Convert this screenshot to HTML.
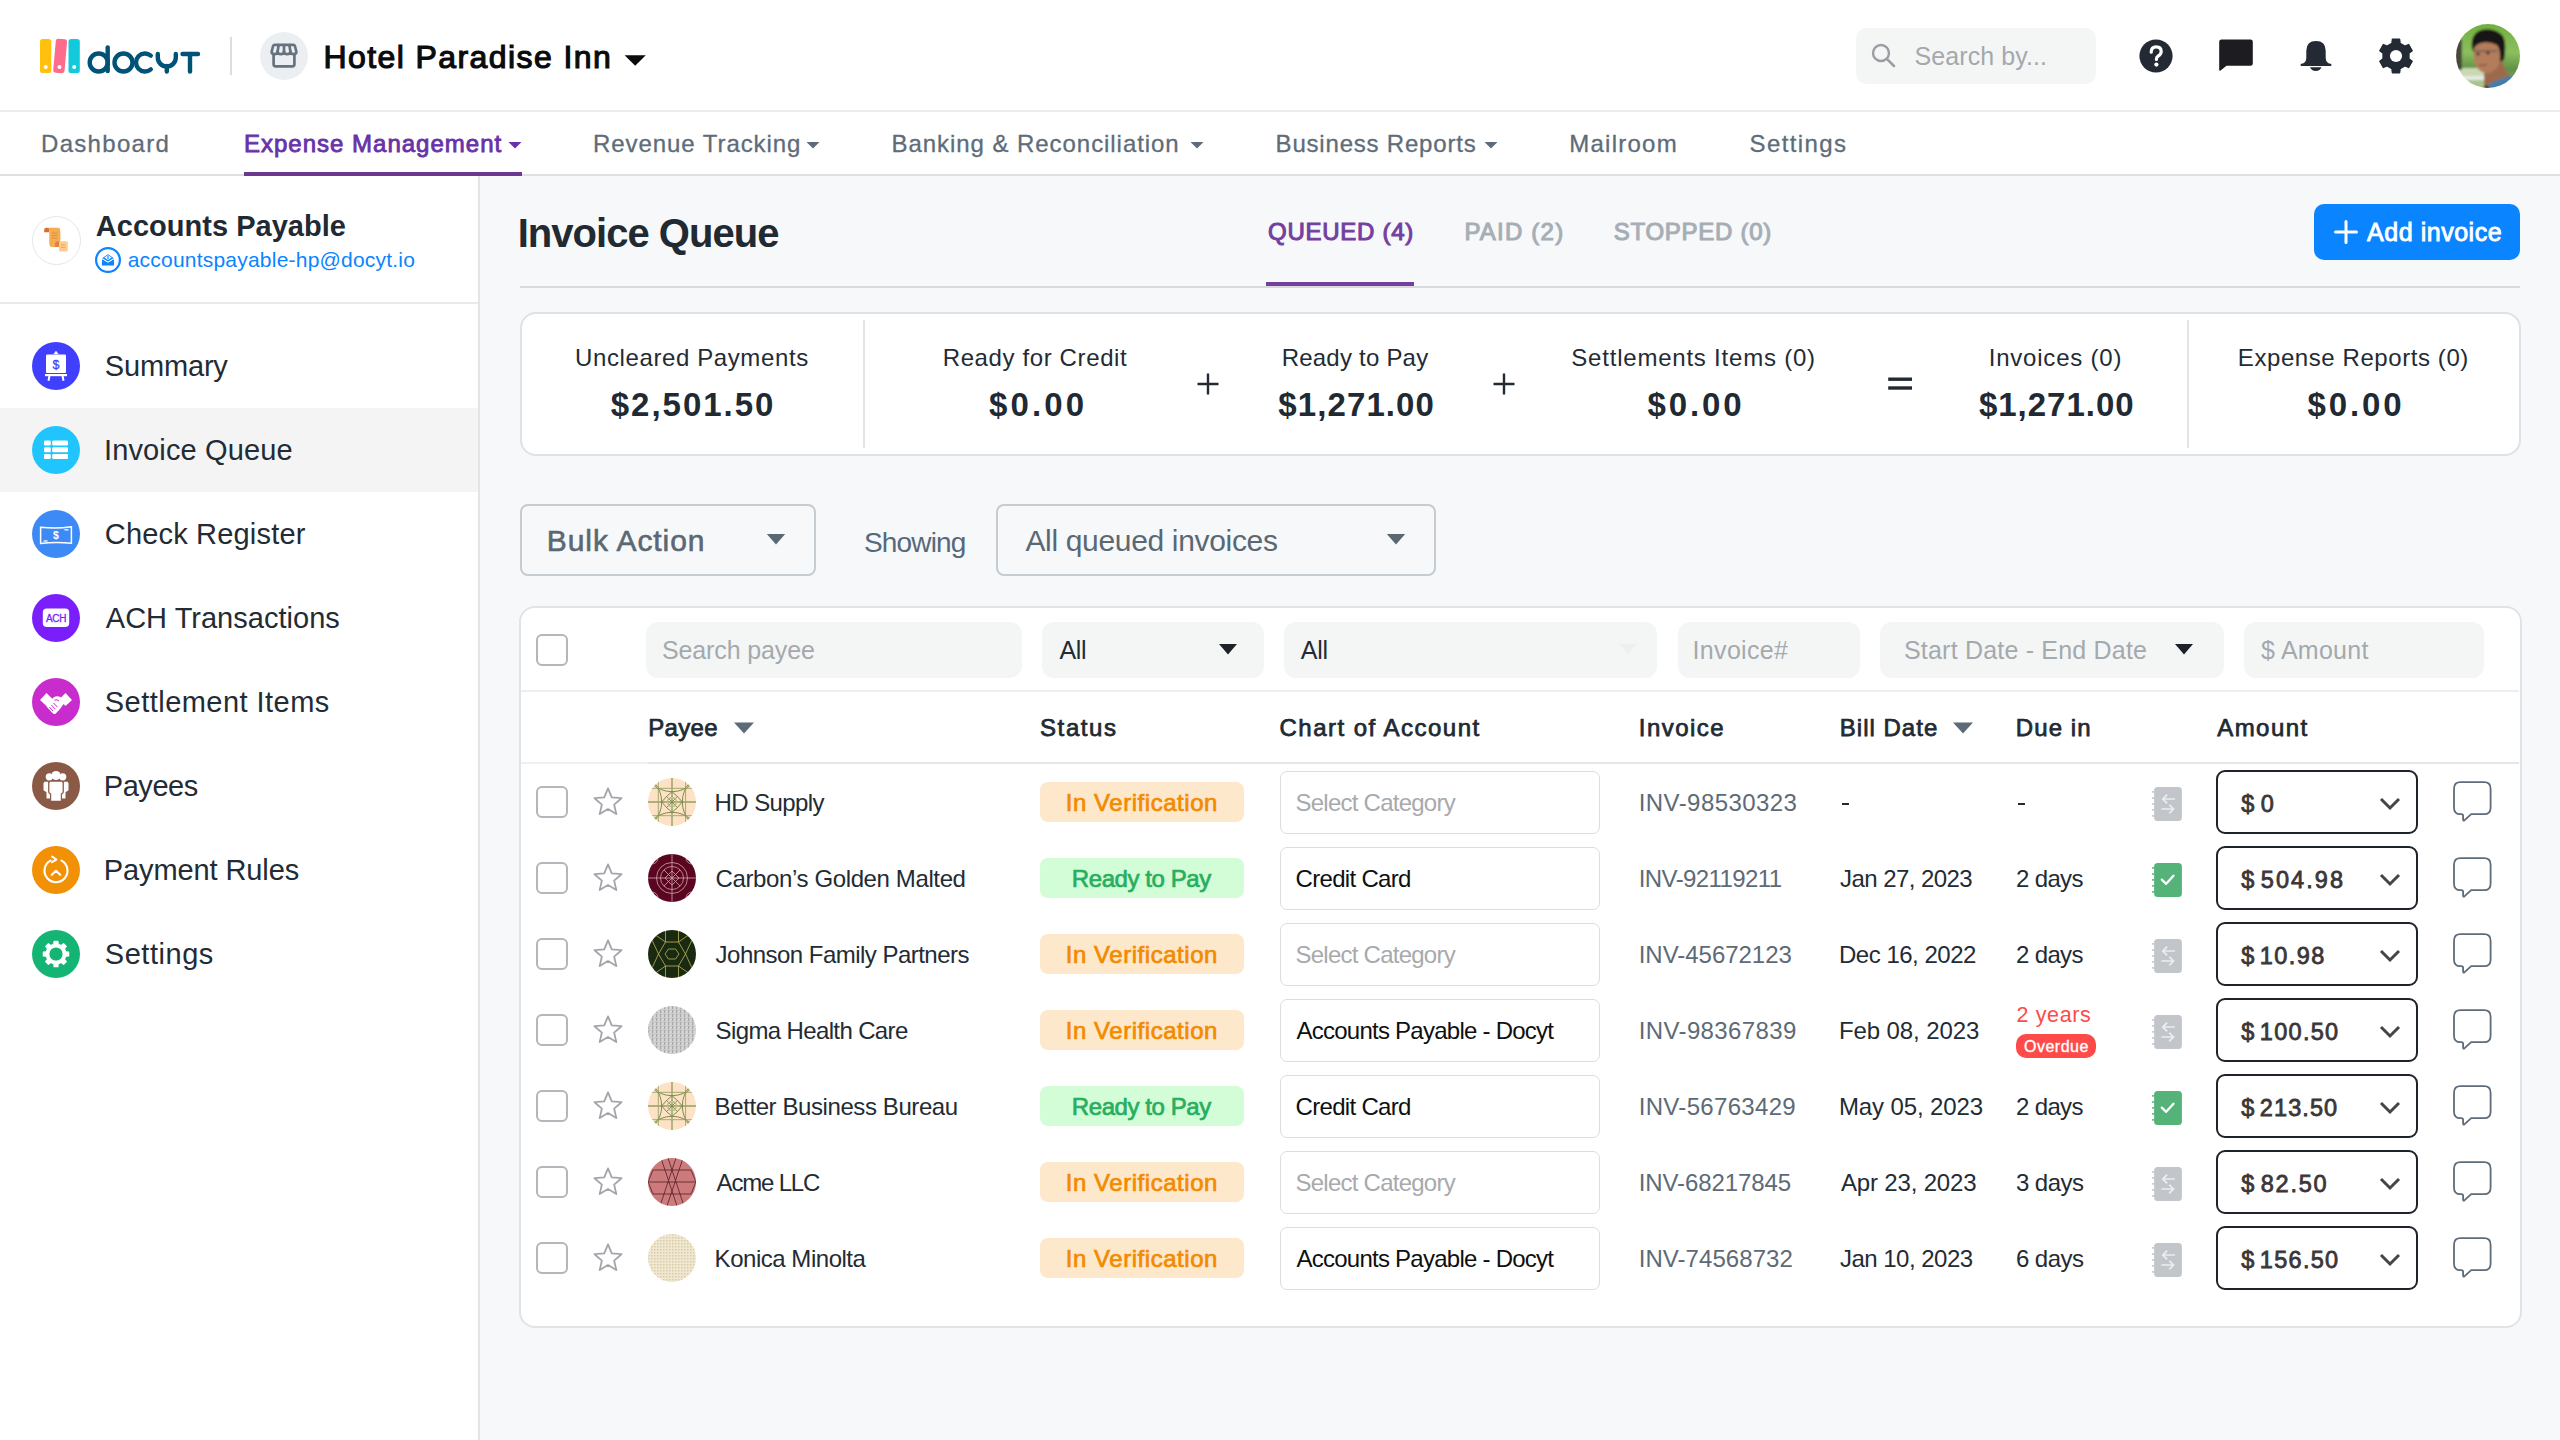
<!DOCTYPE html>
<html><head><meta charset="utf-8"><title>Invoice Queue</title>
<style>
html,body{margin:0;padding:0}
body{width:2560px;height:1440px;position:relative;overflow:hidden;background:#f7f8fa;font-family:"Liberation Sans", sans-serif}
</style></head><body>
<div style="position:absolute;left:0px;top:0px;width:2560px;height:110px;background:#fff;z-index:0"></div>
<div style="position:absolute;left:0px;top:110px;width:2560px;height:2px;background:#ebecee;z-index:0"></div>
<div style="position:absolute;left:0px;top:112px;width:2560px;height:62px;background:#fff;z-index:0"></div>
<div style="position:absolute;left:0px;top:174px;width:2560px;height:2px;background:#dfe0e2;z-index:0"></div>
<div style="position:absolute;left:0px;top:176px;width:478px;height:1264px;background:#fff;z-index:0"></div>
<div style="position:absolute;left:478px;top:176px;width:2px;height:1264px;background:#e3e4e6;z-index:0"></div>
<svg style="position:absolute;left:36px;top:34px;z-index:3" width="170" height="46" viewBox="0 0 170 46">
<rect x="4" y="5" width="11.3" height="34" rx="2.6" fill="#ffc10e"/>
<rect x="18.5" y="5" width="11.3" height="34" rx="2.6" fill="#ff6b8d" transform="rotate(5 24 22)"/>
<rect x="32.5" y="5" width="11.3" height="34" rx="2.6" fill="#13c9dc"/>
<circle cx="9.7" cy="33" r="2" fill="#fff"/>
<circle cx="23.5" cy="33" r="2" fill="#fff"/>
<circle cx="38.2" cy="33" r="2" fill="#fff"/>
<g fill="none" stroke="#005377" stroke-width="4.4" stroke-linecap="round">
<circle cx="62.7" cy="28.5" r="9"/>
<line x1="71.7" y1="13.5" x2="71.7" y2="37"/>
<circle cx="87.5" cy="28.5" r="9"/>
<path d="M114.8 21.6 A 9 9 0 1 0 114.8 35.4"/>
<path d="M121.8 20 V23.5 A 9 9 0 0 0 139.8 23.5 V20"/>
<line x1="130.8" y1="32" x2="130.8" y2="37.5"/>
<line x1="146.5" y1="20" x2="162" y2="20"/>
<line x1="154" y1="20" x2="154" y2="37.5"/>
</g></svg>
<div style="position:absolute;left:230px;top:37px;width:2px;height:38px;background:#dcdddf;z-index:1"></div>
<div style="position:absolute;left:260px;top:32px;width:48px;height:48px;background:#eceff2;border-radius:50%;z-index:1"></div>
<svg style="position:absolute;left:268px;top:41px;z-index:3" width="32" height="30" viewBox="0 0 32 30">
<g fill="none" stroke="#66727e" stroke-width="2.7" stroke-linejoin="round" stroke-linecap="round">
<path d="M6.8 3.9 H25.2 Q26.5 3.9 26.9 5 L28.4 10.8 Q28.4 13.2 25.6 13.2 Q22.4 13.2 22.4 10.5 Q22.4 13.2 19.2 13.2 Q16 13.2 16 10.5 Q16 13.2 12.8 13.2 Q9.6 13.2 9.6 10.5 Q9.6 13.2 6.4 13.2 Q3.6 13.2 3.6 10.8 L5.1 5 Q5.5 3.9 6.8 3.9 Z"/>
<path d="M9.6 10.5 L10.6 4.2 M16 10.5 V4.2 M22.4 10.5 L21.4 4.2"/>
<path d="M5.6 13.5 V23.3 Q5.6 25.4 7.7 25.4 H24.3 Q26.4 25.4 26.4 23.3 V13.5"/>
</g></svg>
<svg style="position:absolute;left:622px;top:50px;z-index:3" width="26" height="18" viewBox="0 0 26 18"><path d="M2.6 5.3 H23.8 L13.2 15.8 Z" fill="#0b0b0c"/></svg>
<div style="position:absolute;left:1856px;top:28px;width:240px;height:56px;background:#f4f6f6;border-radius:10px;z-index:1"></div>
<svg style="position:absolute;left:1868px;top:40px;z-index:3" width="32" height="32" viewBox="0 0 32 32"><circle cx="13" cy="13" r="8" fill="none" stroke="#9a9ea3" stroke-width="2.4"/><line x1="18.8" y1="18.8" x2="26" y2="26" stroke="#9a9ea3" stroke-width="2.6" stroke-linecap="round"/></svg>
<svg style="position:absolute;left:2136px;top:36px;z-index:3" width="40" height="40" viewBox="0 0 40 40"><circle cx="20" cy="20" r="16.6" fill="#232a33"/>
<path d="M15.2 16.2 Q15.2 10.8 20.2 10.8 Q25.2 10.8 25.2 15.6 Q25.2 18.4 22.2 20 Q20.4 21 20.4 23.5" fill="none" stroke="#fff" stroke-width="3.2" stroke-linecap="round"/>
<circle cx="20.4" cy="28.6" r="2.1" fill="#fff"/></svg>
<svg style="position:absolute;left:2216px;top:36px;z-index:3" width="40" height="40" viewBox="0 0 40 40"><path d="M5.5 3.5 H34.5 Q36.8 3.5 36.8 5.8 V27.5 Q36.8 29.8 34.5 29.8 H10.5 L4.6 34.6 Q3.2 35.4 3.2 33.8 V5.8 Q3.2 3.5 5.5 3.5 Z" fill="#1d1c21"/></svg>
<svg style="position:absolute;left:2296px;top:36px;z-index:3" width="40" height="40" viewBox="0 0 40 40"><path d="M10.3 14.7 Q10.3 5 20 5 Q29.7 5 29.7 14.7 V21.5 Q29.7 27 34 27.8 H35.3 V30 H4.7 V27.8 H6 Q10.3 27 10.3 21.5 Z" fill="#232a33"/>
<path d="M14 31.3 H25.5 Q24.2 35 19.8 35 Q15.3 35 14 31.3 Z" fill="#232a33"/></svg>
<svg style="position:absolute;left:2376px;top:36px;z-index:3" width="40" height="40" viewBox="0 0 40 40"><path d="M15.97 7.43 L16.46 3.37 L23.54 3.37 L24.03 7.43 L28.87 10.23 L32.63 8.62 L36.17 14.76 L32.90 17.20 L32.90 22.80 L36.17 25.24 L32.63 31.38 L28.87 29.77 L24.03 32.57 L23.54 36.63 L16.46 36.63 L15.97 32.57 L11.13 29.77 L7.37 31.38 L3.83 25.24 L7.10 22.80 L7.10 17.20 L3.83 14.76 L7.37 8.62 L11.13 10.23 Z" fill="#232a33" stroke="#232a33" stroke-width="1.5" stroke-linejoin="round"/>
<circle cx="20" cy="20" r="6.1" fill="#fff"/></svg>
<svg style="position:absolute;left:2456px;top:24px;z-index:3" width="64" height="64" viewBox="0 0 64 64"><defs><clipPath id="av"><circle cx="32" cy="32" r="32"/></clipPath>
<filter id="avb" x="-10%" y="-10%" width="120%" height="120%"><feGaussianBlur stdDeviation="0.9"/></filter>
<linearGradient id="avg" x1="0" y1="0" x2="0" y2="1"><stop offset="0" stop-color="#6fae3e"/><stop offset="0.45" stop-color="#8cbf5c"/><stop offset="0.7" stop-color="#5f8f45"/><stop offset="1" stop-color="#9fbf80"/></linearGradient></defs>
<g clip-path="url(#av)"><g filter="url(#avb)">
<rect x="-2" y="-2" width="68" height="68" fill="url(#avg)"/>
<rect x="-2" y="44" width="40" height="8" fill="#c9d9b2"/>
<rect x="-2" y="52" width="36" height="4" fill="#e6ece0"/>
<rect x="-2" y="56" width="36" height="10" fill="#a9c48e"/>
<path d="M-1 14 Q4 13 6 17 V46 H-1 Z" fill="#4a463c"/>
<g transform="translate(-5,-4)">
<path d="M33 44 L52 42 Q54 52 60 56 L64 60 V70 H33 Z" fill="#9b6a4d"/>
<path d="M22 26 Q22 18 32 17 Q48 17 50 30 Q51 44 44 50 Q38 55 31 52 Q24 48 23 40 Z" fill="#b37d5c"/>
<path d="M48 30 Q53 30 53 36 Q52 42 48 42 Z" fill="#a87251"/>
<path d="M21 29 Q19 14 30 10 Q44 7 52 16 Q56 24 53 40 L49 42 Q50 30 46 25 Q38 21 30 23 Q24 24 22 31 Z" fill="#191513"/>
<path d="M22 31 H46" stroke="#555" stroke-width="1.2"/>
<ellipse cx="27" cy="34" rx="1.8" ry="1.2" fill="#3a2a22"/><ellipse cx="37" cy="33" rx="1.8" ry="1.2" fill="#3a2a22"/>
<path d="M28 45 Q32 46 36 44.5" stroke="#7a4a3a" stroke-width="1.2" fill="none"/>
</g>
<path d="M27 66 L34 60 Q46 53 62 51 L66 52 V66 Z" fill="#3f7fa9"/>
<path d="M24 66 L31 61 L33 66 Z" fill="#1c1c1c"/>
</g></g></svg>
<svg style="position:absolute;left:508px;top:141px;z-index:3" width="14" height="8" viewBox="0 0 14 8"><path d="M0.5 1 H13.5 L7 7.5 Z" fill="#6832a8"/></svg>
<div style="position:absolute;left:244px;top:172px;width:278px;height:4px;background:#6b3990;z-index:2"></div>
<svg style="position:absolute;left:806px;top:141px;z-index:3" width="14" height="8" viewBox="0 0 14 8"><path d="M0.5 1 H13.5 L7 7.5 Z" fill="#5e6c79"/></svg>
<svg style="position:absolute;left:1190px;top:141px;z-index:3" width="14" height="8" viewBox="0 0 14 8"><path d="M0.5 1 H13.5 L7 7.5 Z" fill="#5e6c79"/></svg>
<svg style="position:absolute;left:1484px;top:141px;z-index:3" width="14" height="8" viewBox="0 0 14 8"><path d="M0.5 1 H13.5 L7 7.5 Z" fill="#5e6c79"/></svg>
<div style="position:absolute;left:32px;top:215.5px;width:47px;height:47px;background:#fff;border:1px solid #e4e6ec;border-radius:50%;z-index:1"></div>
<svg style="position:absolute;left:40px;top:224px;z-index:3" width="32" height="32" viewBox="0 0 32 32">
<path d="M5.5 5 Q5.5 3.8 7.5 3.8 H18 Q20.2 3.8 20.2 6 V20 H9.5 V7.5 Q9.5 5 7.5 5 Z" fill="#f4ad55"/>
<path d="M4.2 5.5 Q4.2 3.8 6.5 3.8 Q9.2 3.8 9.2 6.5 V8.2 H4.2 Z" fill="#dd6f2d"/>
<path d="M9.5 8 H20.2 V21 Q20.2 23 18 23 H11.8 Q9.5 23 9.5 20.8 Z" fill="#f4ad55"/>
<rect x="11.5" y="8.5" width="6" height="1.1" fill="#e88f3a"/><rect x="11.5" y="11" width="6" height="1.1" fill="#e88f3a"/><rect x="11.5" y="13.5" width="6" height="1.1" fill="#e88f3a"/>
<path d="M15 20.5 Q15 17.3 17.5 17.3 Q20 17.3 20 20 V23 H15 Z" fill="#e2804a"/>
<rect x="19" y="17.3" width="8.8" height="10.3" rx="1.5" fill="#fecb8a"/>
<rect x="21" y="20.5" width="4.5" height="1" fill="#f3a457"/><rect x="21" y="23" width="4.5" height="1" fill="#f3a457"/></svg>
<svg style="position:absolute;left:94px;top:246px;z-index:3" width="28" height="28" viewBox="0 0 28 28"><circle cx="14" cy="14" r="11.9" fill="none" stroke="#0a84ff" stroke-width="2.2"/>
<path d="M8 12.2 L14 8.3 L20 12.2 V19.5 H8 Z" fill="#0a84ff"/>
<path d="M10.3 11.6 L14 9.3 L17.7 11.6 L14 14 Z" fill="#fff"/>
<path d="M8 12.5 L14 16.2 L20 12.5" fill="none" stroke="#fff" stroke-width="1.1"/>
<path d="M14 10 V13" stroke="#0a84ff" stroke-width="1.2"/></svg>
<div style="position:absolute;left:0px;top:302px;width:478px;height:2px;background:#e8e9eb;z-index:1"></div>
<div style="position:absolute;left:0px;top:408px;width:478px;height:84px;background:#f4f4f5;z-index:1"></div>
<div style="position:absolute;left:32px;top:342px;width:48px;height:48px;background:#3f3ffd;border-radius:50%;z-index:2"></div>
<div style="position:absolute;left:32px;top:426px;width:48px;height:48px;background:#20c5fd;border-radius:50%;z-index:2"></div>
<div style="position:absolute;left:32px;top:510px;width:48px;height:48px;background:#3d8af7;border-radius:50%;z-index:2"></div>
<div style="position:absolute;left:32px;top:594px;width:48px;height:48px;background:#7a1ffb;border-radius:50%;z-index:2"></div>
<div style="position:absolute;left:32px;top:678px;width:48px;height:48px;background:#c82ccc;border-radius:50%;z-index:2"></div>
<div style="position:absolute;left:32px;top:762px;width:48px;height:48px;background:#8b5a46;border-radius:50%;z-index:2"></div>
<div style="position:absolute;left:32px;top:846px;width:48px;height:48px;background:#f29106;border-radius:50%;z-index:2"></div>
<div style="position:absolute;left:32px;top:930px;width:48px;height:48px;background:#14b574;border-radius:50%;z-index:2"></div>
<svg style="position:absolute;left:32px;top:342px;z-index:3" width="48" height="48" viewBox="0 0 48 48"><path d="M24 8.8 L26.6 12.3 H21.4 Z" fill="#fff"/>
<rect x="14" y="12.5" width="20" height="18.5" rx="1" fill="#fff"/>
<rect x="13" y="32" width="22" height="2.2" fill="#fff"/>
<path d="M17.5 33.5 L16.5 38.8 M30.5 33.5 L31.5 38.8" stroke="#fff" stroke-width="2"/>
<text x="24" y="26.8" font-family="Liberation Sans" font-size="12.5" font-weight="400" stroke="#3f3ffd" stroke-width="0.3" fill="#3f3ffd" text-anchor="middle">$</text></svg>
<svg style="position:absolute;left:32px;top:426px;z-index:3" width="48" height="48" viewBox="0 0 48 48"><g fill="#fff"><rect x="12" y="14.5" width="6.8" height="5" rx="1.2"/><rect x="20.2" y="14.5" width="15.8" height="5" rx="1.2"/>
<rect x="12" y="21.2" width="6.8" height="5" rx="1.2"/><rect x="20.2" y="21.2" width="15.8" height="5" rx="1.2"/>
<rect x="12" y="27.9" width="6.8" height="5" rx="1.2"/><rect x="20.2" y="27.9" width="15.8" height="5" rx="1.2"/></g></svg>
<svg style="position:absolute;left:32px;top:510px;z-index:3" width="48" height="48" viewBox="0 0 48 48"><path d="M8.6 17.2 Q24 19 39.4 16.8 V33.3 Q24 31.5 8.6 33.5 Z" fill="none" stroke="#fff" stroke-width="1.5"/>
<path d="M32.5 19.8 H36.5" stroke="#fff" stroke-width="1.3"/><path d="M11.5 31 H15.5" stroke="#fff" stroke-width="1.3"/>
<text x="24" y="29" font-family="Liberation Sans" font-size="10.5" font-weight="700" fill="#fff" text-anchor="middle">$</text></svg>
<svg style="position:absolute;left:32px;top:594px;z-index:3" width="48" height="48" viewBox="0 0 48 48"><rect x="10.8" y="14.6" width="26.4" height="18.4" rx="4" fill="#fff"/>
<text x="24" y="27.8" font-family="Liberation Sans" font-size="10" font-weight="400" stroke="#7a1ffb" stroke-width="0.3" fill="#7a1ffb" text-anchor="middle" letter-spacing="-0.3">ACH</text></svg>
<svg style="position:absolute;left:32px;top:678px;z-index:3" width="48" height="48" viewBox="0 0 48 48"><g fill="#fff"><path d="M8 22 L14.5 15 L21 21.5 L14.5 28 Z"/><path d="M40 22 L33.5 15 L27 21.5 L33.5 28 Z"/>
<path d="M15 26 L21.5 19.5 Q24.5 17.2 28 18.8 L33.5 23.5 L28 31 L23.8 35.5 Q22 36.8 20.5 35 L14.5 28.5 Z"/></g>
<path d="M17.3 29 L21 33 M19.3 27 L23.3 31.2 M21.5 25 L25.5 29.2 M22.5 22.2 Q25 21 27 23" stroke="#c82ccc" stroke-width="1" fill="none"/></svg>
<svg style="position:absolute;left:32px;top:762px;z-index:3" width="48" height="48" viewBox="0 0 48 48"><g fill="#fff"><circle cx="24" cy="13.5" r="4.6"/><circle cx="17.3" cy="14.8" r="3.6"/><circle cx="30.7" cy="14.8" r="3.6"/>
<path d="M18.8 19.8 H29.2 Q30.8 19.8 30.8 21.6 V30 L28.8 31.8 V38.8 H19.2 V31.8 L17.2 30 V21.6 Q17.2 19.8 18.8 19.8 Z"/>
<path d="M12.5 19.8 H16.3 V30.8 L18 32.5 V36.5 H14.5 V30.2 L11.5 28.2 V21.2 Z"/><path d="M35.5 19.8 H31.7 V30.8 L30 32.5 V36.5 H33.5 V30.2 L36.5 28.2 V21.2 Z"/></g>
<path d="M16.8 19.8 V30.2 M31.2 19.8 V30.2" stroke="#8b5a46" stroke-width="0.9"/></svg>
<svg style="position:absolute;left:32px;top:846px;z-index:3" width="48" height="48" viewBox="0 0 48 48"><path d="M29.5 14.6 A 11.5 11.5 0 1 1 18.5 14.6" fill="none" stroke="#fff" stroke-width="2.1" stroke-linecap="round"/>
<path d="M20.2 10.6 L24.4 13.5 L20 16.2" fill="none" stroke="#fff" stroke-width="2.1" stroke-linecap="round" stroke-linejoin="round"/>
<path d="M19.8 28.8 L24 24.8 L28.2 28.8" fill="none" stroke="#fff" stroke-width="2.1" stroke-linecap="round" stroke-linejoin="round"/></svg>
<svg style="position:absolute;left:32px;top:930px;z-index:3" width="48" height="48" viewBox="0 0 48 48"><path d="M21.79 14.25 L22.07 11.35 L25.93 11.35 L26.21 14.25 L29.33 15.54 L31.58 13.69 L34.31 16.42 L32.46 18.67 L33.75 21.79 L36.65 22.07 L36.65 25.93 L33.75 26.21 L32.46 29.33 L34.31 31.58 L31.58 34.31 L29.33 32.46 L26.21 33.75 L25.93 36.65 L22.07 36.65 L21.79 33.75 L18.67 32.46 L16.42 34.31 L13.69 31.58 L15.54 29.33 L14.25 26.21 L11.35 25.93 L11.35 22.07 L14.25 21.79 L15.54 18.67 L13.69 16.42 L16.42 13.69 L18.67 15.54 Z" fill="#fff" stroke="#fff" stroke-width="1.2" stroke-linejoin="round"/>
<circle cx="24" cy="24" r="6.6" fill="#14b574"/></svg>
<div style="position:absolute;left:520px;top:286px;width:2000px;height:2px;background:#d9dadc;z-index:1"></div>
<div style="position:absolute;left:1266px;top:282px;width:148px;height:4px;background:#7440a0;z-index:2"></div>
<div style="position:absolute;left:2314px;top:204px;width:206px;height:56px;background:#0a84ff;border-radius:10px;z-index:1"></div>
<svg style="position:absolute;left:2333px;top:219px;z-index:3" width="26" height="26" viewBox="0 0 26 26"><path d="M13 2.5 V23.5 M2.5 13 H23.5" stroke="#fff" stroke-width="3" stroke-linecap="round"/></svg>
<div style="position:absolute;left:519.5px;top:312px;width:2001px;height:144px;background:#fff;border:2px solid #dfe1e4;border-radius:16px;box-sizing:border-box;z-index:1"></div>
<div style="position:absolute;left:863px;top:320px;width:2px;height:128px;background:#e3e4e6;z-index:2"></div>
<div style="position:absolute;left:2187px;top:320px;width:2px;height:128px;background:#e3e4e6;z-index:2"></div>
<svg style="position:absolute;left:1196px;top:372px;z-index:3" width="24" height="24" viewBox="0 0 24 24"><path d="M12 1.5 V22.5 M1.5 12 H22.5" stroke="#212a33" stroke-width="2.4"/></svg>
<svg style="position:absolute;left:1492px;top:372px;z-index:3" width="24" height="24" viewBox="0 0 24 24"><path d="M12 1.5 V22.5 M1.5 12 H22.5" stroke="#212a33" stroke-width="2.4"/></svg>
<svg style="position:absolute;left:1886px;top:374px;z-index:3" width="28" height="20" viewBox="0 0 28 20"><rect x="2.2" y="3.5" width="23.8" height="3.4" fill="#212a33"/><rect x="2.2" y="12.3" width="23.8" height="3.4" fill="#212a33"/></svg>
<div style="position:absolute;left:520px;top:504px;width:296px;height:72px;border:2px solid #c5ccd2;border-radius:8px;box-sizing:border-box;z-index:1"></div>
<svg style="position:absolute;left:766px;top:533px;z-index:3" width="20" height="12" viewBox="0 0 20 12"><path d="M0.8 1 H19.2 L10 11.5 Z" fill="#5a6873"/></svg>
<div style="position:absolute;left:996px;top:504px;width:440px;height:72px;border:2px solid #c5ccd2;border-radius:8px;box-sizing:border-box;z-index:1"></div>
<svg style="position:absolute;left:1386px;top:533px;z-index:3" width="20" height="12" viewBox="0 0 20 12"><path d="M0.8 1 H19.2 L10 11.5 Z" fill="#5a6873"/></svg>
<div style="position:absolute;left:519px;top:606px;width:2003px;height:722px;background:#fff;border:2px solid #e1e3e6;border-radius:16px;box-sizing:border-box;z-index:1"></div>
<div style="position:absolute;left:536px;top:634px;width:32px;height:32px;border:2.2px solid #b3b6bb;border-radius:6px;box-sizing:border-box;background:#fff;z-index:3"></div>
<div style="position:absolute;left:646px;top:622px;width:376px;height:56px;background:#f4f6f6;border-radius:12px;z-index:2"></div>
<div style="position:absolute;left:1042px;top:622px;width:222px;height:56px;background:#f4f6f6;border-radius:12px;z-index:2"></div>
<div style="position:absolute;left:1284px;top:622px;width:373px;height:56px;background:#f4f6f6;border-radius:12px;z-index:2"></div>
<div style="position:absolute;left:1678px;top:622px;width:182px;height:56px;background:#f4f6f6;border-radius:12px;z-index:2"></div>
<div style="position:absolute;left:1880px;top:622px;width:344px;height:56px;background:#f4f6f6;border-radius:12px;z-index:2"></div>
<div style="position:absolute;left:2244px;top:622px;width:240px;height:56px;background:#f4f6f6;border-radius:12px;z-index:2"></div>
<svg style="position:absolute;left:1218px;top:643px;z-index:3" width="20" height="13" viewBox="0 0 20 13"><path d="M1 1 H19 L10 11.5 Z" fill="#1d2329"/></svg>
<svg style="position:absolute;left:1618px;top:643px;z-index:3" width="20" height="13" viewBox="0 0 20 13"><path d="M1 1 H19 L10 11.5 Z" fill="#eef0f0"/></svg>
<svg style="position:absolute;left:2174px;top:643px;z-index:3" width="20" height="13" viewBox="0 0 20 13"><path d="M1 1 H19 L10 11.5 Z" fill="#1d2329"/></svg>
<div style="position:absolute;left:521px;top:690px;width:1998px;height:2px;background:#eceef0;z-index:2"></div>
<svg style="position:absolute;left:733px;top:721px;z-index:3" width="22" height="14" viewBox="0 0 22 14"><path d="M1 1.5 H21 L11 12.5 Z" fill="#5d6a77"/></svg>
<svg style="position:absolute;left:1952px;top:721px;z-index:3" width="22" height="14" viewBox="0 0 22 14"><path d="M1 1.5 H21 L11 12.5 Z" fill="#5d6a77"/></svg>
<div style="position:absolute;left:521px;top:762px;width:127px;height:2px;background:#eef0f2;z-index:2"></div>
<div style="position:absolute;left:648px;top:762px;width:1871px;height:2px;background:#e4e6e9;z-index:2"></div>
<div style="position:absolute;left:536px;top:786px;width:32px;height:32px;border:2.2px solid #b3b6bb;border-radius:6px;box-sizing:border-box;background:#fff;z-index:3"></div>
<svg style="position:absolute;left:592px;top:786px;z-index:3" width="32" height="32" viewBox="0 0 32 32"><polygon points="16.00,2.40 19.76,11.42 29.51,12.21 22.09,18.58 24.35,28.09 16.00,23.00 7.65,28.09 9.91,18.58 2.49,12.21 12.24,11.42" fill="none" stroke="#a2a5ab" stroke-width="1.8" stroke-linejoin="round"/></svg>
<svg style="position:absolute;left:648px;top:778px;z-index:3" width="48" height="48" viewBox="0 0 48 48"><defs><clipPath id="avc0"><circle cx="24" cy="24" r="24"/></clipPath></defs><g clip-path="url(#avc0)"><rect width="48" height="48" fill="#fee2c5"/><g fill="none">
<path d="M24 0 V48 M0 24 H48" stroke="#aab07a" stroke-width="1.8"/>
<path d="M10.3 0 V48 M37.6 0 V48 M0 10.3 H48 M0 37.7 H48" stroke="#a3a972" stroke-width="1"/>
<g stroke="#7f8a4c" stroke-width="1"><circle cx="24" cy="-15.2" r="28.9"/><circle cx="24" cy="63.2" r="28.9"/><circle cx="-15.2" cy="24" r="28.9"/><circle cx="63.2" cy="24" r="28.9"/>
<path d="M13.7 24 Q18.2 18.2 24 13.7 Q29.8 18.2 34.3 24 Q29.8 29.8 24 34.3 Q18.2 29.8 13.7 24 Z"/>
<path d="M18.6 18.5 L29.4 29.5 M29.4 18.5 L18.6 29.5"/></g><path d="M6.5 6.5 L10.3 10.3 M41.5 6.5 L37.7 10.3 M6.5 41.5 L10.3 37.7 M41.5 41.5 L37.7 37.7" stroke="#b5b985" stroke-width="0.8"/>
<circle cx="24" cy="24" r="4.4" stroke="#b9bc8c" stroke-width="1.5"/></g></g></svg>
<div style="position:absolute;left:1040px;top:782px;width:204px;height:40px;background:#fde8cc;border-radius:8px;z-index:2"></div>
<div style="position:absolute;left:1280px;top:770.5px;width:320px;height:63px;background:#fff;border:1.8px solid #dcdddf;border-radius:7px;box-sizing:border-box;z-index:2"></div>
<div style="position:absolute;left:1841.5px;top:802.5px;width:7px;height:2px;background:#232b34;z-index:3"></div>
<div style="position:absolute;left:2017.5px;top:802.5px;width:7px;height:2px;background:#232b34;z-index:3"></div>
<svg style="position:absolute;left:2150px;top:786px;z-index:3" width="34" height="36" viewBox="0 0 34 36"><rect x="4.1" y="1" width="27.8" height="34" rx="3.5" fill="#c2c6ca"/><rect x="2" y="5.15" width="2.3" height="1.5" fill="#c2c6ca"/><rect x="2" y="11.25" width="2.3" height="1.5" fill="#c2c6ca"/><rect x="2" y="17.15" width="2.3" height="1.5" fill="#c2c6ca"/><rect x="2" y="23.15" width="2.3" height="1.5" fill="#c2c6ca"/><rect x="2" y="29.15" width="2.3" height="1.5" fill="#c2c6ca"/><g fill="none" stroke="#eceef0" stroke-width="1.7" stroke-linecap="square" stroke-linejoin="miter"><path d="M24 13 H13 M16.5 9.3 L12.8 13 L16.5 16.7"/><path d="M12.3 23 H23.3 M19.8 19.3 L23.5 23 L19.8 26.7"/></g></svg>
<div style="position:absolute;left:2216px;top:770px;width:202px;height:64px;background:#fff;border:2.2px solid #1e2329;border-radius:9px;box-sizing:border-box;z-index:2"></div>
<svg style="position:absolute;left:2378px;top:796px;z-index:3" width="24" height="16" viewBox="0 0 24 16"><path d="M3 3 L12 12 L21 3" fill="none" stroke="#454545" stroke-width="3" stroke-linecap="butt" stroke-linejoin="miter"/></svg>
<svg style="position:absolute;left:2450px;top:779px;z-index:3" width="44" height="44" viewBox="0 0 44 44"><path d="M10.5 3.2 H34.1 Q40.6 3.2 40.6 9.7 V28.7 Q40.6 35.2 34.1 35.2 H21.2 L14.6 41.2 Q13.1 42.3 13.1 40.5 V36.8 Q13.1 35.2 11.5 35.2 H10.5 Q4 35.2 4 28.7 V9.7 Q4 3.2 10.5 3.2 Z" fill="#fff" stroke="#5f6c79" stroke-width="1.8" stroke-linejoin="round"/></svg>
<div style="position:absolute;left:536px;top:862px;width:32px;height:32px;border:2.2px solid #b3b6bb;border-radius:6px;box-sizing:border-box;background:#fff;z-index:3"></div>
<svg style="position:absolute;left:592px;top:862px;z-index:3" width="32" height="32" viewBox="0 0 32 32"><polygon points="16.00,2.40 19.76,11.42 29.51,12.21 22.09,18.58 24.35,28.09 16.00,23.00 7.65,28.09 9.91,18.58 2.49,12.21 12.24,11.42" fill="none" stroke="#a2a5ab" stroke-width="1.8" stroke-linejoin="round"/></svg>
<svg style="position:absolute;left:648px;top:854px;z-index:3" width="48" height="48" viewBox="0 0 48 48"><defs><clipPath id="avc1"><circle cx="24" cy="24" r="24"/></clipPath></defs><g clip-path="url(#avc1)"><rect width="48" height="48" fill="#5a0620"/><g fill="none" stroke="#d5a3ad" stroke-width="0.8">
<path d="M24 0 V48 M0 24 H48"/><circle cx="24" cy="24" r="15.5"/><circle cx="24" cy="24" r="11.5"/>
<path d="M24 17 L31 24 L24 31 L17 24 Z M16 16 L32 32 M32 16 L16 32"/>
<circle cx="4" cy="4" r="6"/><circle cx="44" cy="4" r="6"/><circle cx="4" cy="44" r="6"/><circle cx="44" cy="44" r="6"/></g></g></svg>
<div style="position:absolute;left:1040px;top:858px;width:204px;height:40px;background:#d3fdd6;border-radius:8px;z-index:2"></div>
<div style="position:absolute;left:1280px;top:846.5px;width:320px;height:63px;background:#fff;border:1.8px solid #dcdddf;border-radius:7px;box-sizing:border-box;z-index:2"></div>
<svg style="position:absolute;left:2150px;top:862px;z-index:3" width="34" height="36" viewBox="0 0 34 36"><rect x="4.1" y="1" width="27.8" height="34" rx="3.5" fill="#55b37a"/><rect x="2" y="5.15" width="2.3" height="1.5" fill="#55b37a"/><rect x="2" y="11.25" width="2.3" height="1.5" fill="#55b37a"/><rect x="2" y="17.15" width="2.3" height="1.5" fill="#55b37a"/><rect x="2" y="23.15" width="2.3" height="1.5" fill="#55b37a"/><rect x="2" y="29.15" width="2.3" height="1.5" fill="#55b37a"/><path d="M11.8 17.6 L16.2 21.8 L23.5 13.8" fill="none" stroke="#fff" stroke-width="2.3" stroke-linecap="round" stroke-linejoin="round"/></svg>
<div style="position:absolute;left:2216px;top:846px;width:202px;height:64px;background:#fff;border:2.2px solid #1e2329;border-radius:9px;box-sizing:border-box;z-index:2"></div>
<svg style="position:absolute;left:2378px;top:872px;z-index:3" width="24" height="16" viewBox="0 0 24 16"><path d="M3 3 L12 12 L21 3" fill="none" stroke="#454545" stroke-width="3" stroke-linecap="butt" stroke-linejoin="miter"/></svg>
<svg style="position:absolute;left:2450px;top:855px;z-index:3" width="44" height="44" viewBox="0 0 44 44"><path d="M10.5 3.2 H34.1 Q40.6 3.2 40.6 9.7 V28.7 Q40.6 35.2 34.1 35.2 H21.2 L14.6 41.2 Q13.1 42.3 13.1 40.5 V36.8 Q13.1 35.2 11.5 35.2 H10.5 Q4 35.2 4 28.7 V9.7 Q4 3.2 10.5 3.2 Z" fill="#fff" stroke="#5f6c79" stroke-width="1.8" stroke-linejoin="round"/></svg>
<div style="position:absolute;left:536px;top:938px;width:32px;height:32px;border:2.2px solid #b3b6bb;border-radius:6px;box-sizing:border-box;background:#fff;z-index:3"></div>
<svg style="position:absolute;left:592px;top:938px;z-index:3" width="32" height="32" viewBox="0 0 32 32"><polygon points="16.00,2.40 19.76,11.42 29.51,12.21 22.09,18.58 24.35,28.09 16.00,23.00 7.65,28.09 9.91,18.58 2.49,12.21 12.24,11.42" fill="none" stroke="#a2a5ab" stroke-width="1.8" stroke-linejoin="round"/></svg>
<svg style="position:absolute;left:648px;top:930px;z-index:3" width="48" height="48" viewBox="0 0 48 48"><defs><clipPath id="avc2"><circle cx="24" cy="24" r="24"/></clipPath></defs><g clip-path="url(#avc2)"><rect width="48" height="48" fill="#1a2a10"/><g fill="none" stroke="#bdb45f" stroke-width="0.8">
<path d="M17.5 0 V12 M30.5 0 V12 M17.5 36 V48 M30.5 36 V48 M17.5 12 H30.5 M17.5 36 H30.5"/>
<path d="M17.5 12 L10.5 24 L17.5 36 M30.5 12 L37.5 24 L30.5 36 M10.5 24 L4 10 M10.5 24 L4 38 M37.5 24 L44 10 M37.5 24 L44 38"/>
<path d="M17.5 12 L6 4 M30.5 12 L42 4 M17.5 36 L6 44 M30.5 36 L42 44"/>
<path d="M20.5 19 H27.5 L31 24 L27.5 29 H20.5 L17 24 Z"/></g></g></svg>
<div style="position:absolute;left:1040px;top:934px;width:204px;height:40px;background:#fde8cc;border-radius:8px;z-index:2"></div>
<div style="position:absolute;left:1280px;top:922.5px;width:320px;height:63px;background:#fff;border:1.8px solid #dcdddf;border-radius:7px;box-sizing:border-box;z-index:2"></div>
<svg style="position:absolute;left:2150px;top:938px;z-index:3" width="34" height="36" viewBox="0 0 34 36"><rect x="4.1" y="1" width="27.8" height="34" rx="3.5" fill="#c2c6ca"/><rect x="2" y="5.15" width="2.3" height="1.5" fill="#c2c6ca"/><rect x="2" y="11.25" width="2.3" height="1.5" fill="#c2c6ca"/><rect x="2" y="17.15" width="2.3" height="1.5" fill="#c2c6ca"/><rect x="2" y="23.15" width="2.3" height="1.5" fill="#c2c6ca"/><rect x="2" y="29.15" width="2.3" height="1.5" fill="#c2c6ca"/><g fill="none" stroke="#eceef0" stroke-width="1.7" stroke-linecap="square" stroke-linejoin="miter"><path d="M24 13 H13 M16.5 9.3 L12.8 13 L16.5 16.7"/><path d="M12.3 23 H23.3 M19.8 19.3 L23.5 23 L19.8 26.7"/></g></svg>
<div style="position:absolute;left:2216px;top:922px;width:202px;height:64px;background:#fff;border:2.2px solid #1e2329;border-radius:9px;box-sizing:border-box;z-index:2"></div>
<svg style="position:absolute;left:2378px;top:948px;z-index:3" width="24" height="16" viewBox="0 0 24 16"><path d="M3 3 L12 12 L21 3" fill="none" stroke="#454545" stroke-width="3" stroke-linecap="butt" stroke-linejoin="miter"/></svg>
<svg style="position:absolute;left:2450px;top:931px;z-index:3" width="44" height="44" viewBox="0 0 44 44"><path d="M10.5 3.2 H34.1 Q40.6 3.2 40.6 9.7 V28.7 Q40.6 35.2 34.1 35.2 H21.2 L14.6 41.2 Q13.1 42.3 13.1 40.5 V36.8 Q13.1 35.2 11.5 35.2 H10.5 Q4 35.2 4 28.7 V9.7 Q4 3.2 10.5 3.2 Z" fill="#fff" stroke="#5f6c79" stroke-width="1.8" stroke-linejoin="round"/></svg>
<div style="position:absolute;left:536px;top:1014px;width:32px;height:32px;border:2.2px solid #b3b6bb;border-radius:6px;box-sizing:border-box;background:#fff;z-index:3"></div>
<svg style="position:absolute;left:592px;top:1014px;z-index:3" width="32" height="32" viewBox="0 0 32 32"><polygon points="16.00,2.40 19.76,11.42 29.51,12.21 22.09,18.58 24.35,28.09 16.00,23.00 7.65,28.09 9.91,18.58 2.49,12.21 12.24,11.42" fill="none" stroke="#a2a5ab" stroke-width="1.8" stroke-linejoin="round"/></svg>
<svg style="position:absolute;left:648px;top:1006px;z-index:3" width="48" height="48" viewBox="0 0 48 48"><defs><clipPath id="avc3"><circle cx="24" cy="24" r="24"/></clipPath></defs><g clip-path="url(#avc3)"><defs><pattern id="sgp" width="4" height="4" patternUnits="userSpaceOnUse"><rect width="4" height="4" fill="#cdcdcd"/><rect x="0" y="0" width="1.2" height="3" fill="#a9a9a9"/><rect x="2.2" y="1" width="1" height="2" fill="#e0e0e0"/></pattern></defs><rect width="48" height="48" fill="url(#sgp)"/></g></svg>
<div style="position:absolute;left:1040px;top:1010px;width:204px;height:40px;background:#fde8cc;border-radius:8px;z-index:2"></div>
<div style="position:absolute;left:1280px;top:998.5px;width:320px;height:63px;background:#fff;border:1.8px solid #dcdddf;border-radius:7px;box-sizing:border-box;z-index:2"></div>
<div style="position:absolute;left:2016px;top:1034px;width:80px;height:24px;background:#ff4a4a;border-radius:10px;z-index:2"></div>
<svg style="position:absolute;left:2150px;top:1014px;z-index:3" width="34" height="36" viewBox="0 0 34 36"><rect x="4.1" y="1" width="27.8" height="34" rx="3.5" fill="#c2c6ca"/><rect x="2" y="5.15" width="2.3" height="1.5" fill="#c2c6ca"/><rect x="2" y="11.25" width="2.3" height="1.5" fill="#c2c6ca"/><rect x="2" y="17.15" width="2.3" height="1.5" fill="#c2c6ca"/><rect x="2" y="23.15" width="2.3" height="1.5" fill="#c2c6ca"/><rect x="2" y="29.15" width="2.3" height="1.5" fill="#c2c6ca"/><g fill="none" stroke="#eceef0" stroke-width="1.7" stroke-linecap="square" stroke-linejoin="miter"><path d="M24 13 H13 M16.5 9.3 L12.8 13 L16.5 16.7"/><path d="M12.3 23 H23.3 M19.8 19.3 L23.5 23 L19.8 26.7"/></g></svg>
<div style="position:absolute;left:2216px;top:998px;width:202px;height:64px;background:#fff;border:2.2px solid #1e2329;border-radius:9px;box-sizing:border-box;z-index:2"></div>
<svg style="position:absolute;left:2378px;top:1024px;z-index:3" width="24" height="16" viewBox="0 0 24 16"><path d="M3 3 L12 12 L21 3" fill="none" stroke="#454545" stroke-width="3" stroke-linecap="butt" stroke-linejoin="miter"/></svg>
<svg style="position:absolute;left:2450px;top:1007px;z-index:3" width="44" height="44" viewBox="0 0 44 44"><path d="M10.5 3.2 H34.1 Q40.6 3.2 40.6 9.7 V28.7 Q40.6 35.2 34.1 35.2 H21.2 L14.6 41.2 Q13.1 42.3 13.1 40.5 V36.8 Q13.1 35.2 11.5 35.2 H10.5 Q4 35.2 4 28.7 V9.7 Q4 3.2 10.5 3.2 Z" fill="#fff" stroke="#5f6c79" stroke-width="1.8" stroke-linejoin="round"/></svg>
<div style="position:absolute;left:536px;top:1090px;width:32px;height:32px;border:2.2px solid #b3b6bb;border-radius:6px;box-sizing:border-box;background:#fff;z-index:3"></div>
<svg style="position:absolute;left:592px;top:1090px;z-index:3" width="32" height="32" viewBox="0 0 32 32"><polygon points="16.00,2.40 19.76,11.42 29.51,12.21 22.09,18.58 24.35,28.09 16.00,23.00 7.65,28.09 9.91,18.58 2.49,12.21 12.24,11.42" fill="none" stroke="#a2a5ab" stroke-width="1.8" stroke-linejoin="round"/></svg>
<svg style="position:absolute;left:648px;top:1082px;z-index:3" width="48" height="48" viewBox="0 0 48 48"><defs><clipPath id="avc4"><circle cx="24" cy="24" r="24"/></clipPath></defs><g clip-path="url(#avc4)"><rect width="48" height="48" fill="#fee2c5"/><g fill="none">
<path d="M24 0 V48 M0 24 H48" stroke="#aab07a" stroke-width="1.8"/>
<path d="M10.3 0 V48 M37.6 0 V48 M0 10.3 H48 M0 37.7 H48" stroke="#a3a972" stroke-width="1"/>
<g stroke="#7f8a4c" stroke-width="1"><circle cx="24" cy="-15.2" r="28.9"/><circle cx="24" cy="63.2" r="28.9"/><circle cx="-15.2" cy="24" r="28.9"/><circle cx="63.2" cy="24" r="28.9"/>
<path d="M13.7 24 Q18.2 18.2 24 13.7 Q29.8 18.2 34.3 24 Q29.8 29.8 24 34.3 Q18.2 29.8 13.7 24 Z"/>
<path d="M18.6 18.5 L29.4 29.5 M29.4 18.5 L18.6 29.5"/></g><path d="M6.5 6.5 L10.3 10.3 M41.5 6.5 L37.7 10.3 M6.5 41.5 L10.3 37.7 M41.5 41.5 L37.7 37.7" stroke="#b5b985" stroke-width="0.8"/>
<circle cx="24" cy="24" r="4.4" stroke="#b9bc8c" stroke-width="1.5"/></g></g></svg>
<div style="position:absolute;left:1040px;top:1086px;width:204px;height:40px;background:#d3fdd6;border-radius:8px;z-index:2"></div>
<div style="position:absolute;left:1280px;top:1074.5px;width:320px;height:63px;background:#fff;border:1.8px solid #dcdddf;border-radius:7px;box-sizing:border-box;z-index:2"></div>
<svg style="position:absolute;left:2150px;top:1090px;z-index:3" width="34" height="36" viewBox="0 0 34 36"><rect x="4.1" y="1" width="27.8" height="34" rx="3.5" fill="#55b37a"/><rect x="2" y="5.15" width="2.3" height="1.5" fill="#55b37a"/><rect x="2" y="11.25" width="2.3" height="1.5" fill="#55b37a"/><rect x="2" y="17.15" width="2.3" height="1.5" fill="#55b37a"/><rect x="2" y="23.15" width="2.3" height="1.5" fill="#55b37a"/><rect x="2" y="29.15" width="2.3" height="1.5" fill="#55b37a"/><path d="M11.8 17.6 L16.2 21.8 L23.5 13.8" fill="none" stroke="#fff" stroke-width="2.3" stroke-linecap="round" stroke-linejoin="round"/></svg>
<div style="position:absolute;left:2216px;top:1074px;width:202px;height:64px;background:#fff;border:2.2px solid #1e2329;border-radius:9px;box-sizing:border-box;z-index:2"></div>
<svg style="position:absolute;left:2378px;top:1100px;z-index:3" width="24" height="16" viewBox="0 0 24 16"><path d="M3 3 L12 12 L21 3" fill="none" stroke="#454545" stroke-width="3" stroke-linecap="butt" stroke-linejoin="miter"/></svg>
<svg style="position:absolute;left:2450px;top:1083px;z-index:3" width="44" height="44" viewBox="0 0 44 44"><path d="M10.5 3.2 H34.1 Q40.6 3.2 40.6 9.7 V28.7 Q40.6 35.2 34.1 35.2 H21.2 L14.6 41.2 Q13.1 42.3 13.1 40.5 V36.8 Q13.1 35.2 11.5 35.2 H10.5 Q4 35.2 4 28.7 V9.7 Q4 3.2 10.5 3.2 Z" fill="#fff" stroke="#5f6c79" stroke-width="1.8" stroke-linejoin="round"/></svg>
<div style="position:absolute;left:536px;top:1166px;width:32px;height:32px;border:2.2px solid #b3b6bb;border-radius:6px;box-sizing:border-box;background:#fff;z-index:3"></div>
<svg style="position:absolute;left:592px;top:1166px;z-index:3" width="32" height="32" viewBox="0 0 32 32"><polygon points="16.00,2.40 19.76,11.42 29.51,12.21 22.09,18.58 24.35,28.09 16.00,23.00 7.65,28.09 9.91,18.58 2.49,12.21 12.24,11.42" fill="none" stroke="#a2a5ab" stroke-width="1.8" stroke-linejoin="round"/></svg>
<svg style="position:absolute;left:648px;top:1158px;z-index:3" width="48" height="48" viewBox="0 0 48 48"><defs><clipPath id="avc5"><circle cx="24" cy="24" r="24"/></clipPath></defs><g clip-path="url(#avc5)"><rect width="48" height="48" fill="#cd7a7d"/><g fill="none" stroke="#5e2a2e" stroke-width="0.9">
<path d="M0 24 H48 M5 12 H43 M5 36 H43"/>
<path d="M5 12 L0 24 L5 36 M43 12 L48 24 L43 36"/>
<path d="M13 0 L29 48 M35 0 L19 48 M20 0 L36 48 M28 0 L12 48"/></g></g></svg>
<div style="position:absolute;left:1040px;top:1162px;width:204px;height:40px;background:#fde8cc;border-radius:8px;z-index:2"></div>
<div style="position:absolute;left:1280px;top:1150.5px;width:320px;height:63px;background:#fff;border:1.8px solid #dcdddf;border-radius:7px;box-sizing:border-box;z-index:2"></div>
<svg style="position:absolute;left:2150px;top:1166px;z-index:3" width="34" height="36" viewBox="0 0 34 36"><rect x="4.1" y="1" width="27.8" height="34" rx="3.5" fill="#c2c6ca"/><rect x="2" y="5.15" width="2.3" height="1.5" fill="#c2c6ca"/><rect x="2" y="11.25" width="2.3" height="1.5" fill="#c2c6ca"/><rect x="2" y="17.15" width="2.3" height="1.5" fill="#c2c6ca"/><rect x="2" y="23.15" width="2.3" height="1.5" fill="#c2c6ca"/><rect x="2" y="29.15" width="2.3" height="1.5" fill="#c2c6ca"/><g fill="none" stroke="#eceef0" stroke-width="1.7" stroke-linecap="square" stroke-linejoin="miter"><path d="M24 13 H13 M16.5 9.3 L12.8 13 L16.5 16.7"/><path d="M12.3 23 H23.3 M19.8 19.3 L23.5 23 L19.8 26.7"/></g></svg>
<div style="position:absolute;left:2216px;top:1150px;width:202px;height:64px;background:#fff;border:2.2px solid #1e2329;border-radius:9px;box-sizing:border-box;z-index:2"></div>
<svg style="position:absolute;left:2378px;top:1176px;z-index:3" width="24" height="16" viewBox="0 0 24 16"><path d="M3 3 L12 12 L21 3" fill="none" stroke="#454545" stroke-width="3" stroke-linecap="butt" stroke-linejoin="miter"/></svg>
<svg style="position:absolute;left:2450px;top:1159px;z-index:3" width="44" height="44" viewBox="0 0 44 44"><path d="M10.5 3.2 H34.1 Q40.6 3.2 40.6 9.7 V28.7 Q40.6 35.2 34.1 35.2 H21.2 L14.6 41.2 Q13.1 42.3 13.1 40.5 V36.8 Q13.1 35.2 11.5 35.2 H10.5 Q4 35.2 4 28.7 V9.7 Q4 3.2 10.5 3.2 Z" fill="#fff" stroke="#5f6c79" stroke-width="1.8" stroke-linejoin="round"/></svg>
<div style="position:absolute;left:536px;top:1242px;width:32px;height:32px;border:2.2px solid #b3b6bb;border-radius:6px;box-sizing:border-box;background:#fff;z-index:3"></div>
<svg style="position:absolute;left:592px;top:1242px;z-index:3" width="32" height="32" viewBox="0 0 32 32"><polygon points="16.00,2.40 19.76,11.42 29.51,12.21 22.09,18.58 24.35,28.09 16.00,23.00 7.65,28.09 9.91,18.58 2.49,12.21 12.24,11.42" fill="none" stroke="#a2a5ab" stroke-width="1.8" stroke-linejoin="round"/></svg>
<svg style="position:absolute;left:648px;top:1234px;z-index:3" width="48" height="48" viewBox="0 0 48 48"><defs><clipPath id="avc6"><circle cx="24" cy="24" r="24"/></clipPath></defs><g clip-path="url(#avc6)"><defs><pattern id="kmp" width="3" height="3" patternUnits="userSpaceOnUse"><rect width="3" height="3" fill="#f1e8d4"/><rect x="0" y="0" width="1.5" height="1.5" fill="#d9caa4"/></pattern></defs><rect width="48" height="48" fill="url(#kmp)"/></g></svg>
<div style="position:absolute;left:1040px;top:1238px;width:204px;height:40px;background:#fde8cc;border-radius:8px;z-index:2"></div>
<div style="position:absolute;left:1280px;top:1226.5px;width:320px;height:63px;background:#fff;border:1.8px solid #dcdddf;border-radius:7px;box-sizing:border-box;z-index:2"></div>
<svg style="position:absolute;left:2150px;top:1242px;z-index:3" width="34" height="36" viewBox="0 0 34 36"><rect x="4.1" y="1" width="27.8" height="34" rx="3.5" fill="#c2c6ca"/><rect x="2" y="5.15" width="2.3" height="1.5" fill="#c2c6ca"/><rect x="2" y="11.25" width="2.3" height="1.5" fill="#c2c6ca"/><rect x="2" y="17.15" width="2.3" height="1.5" fill="#c2c6ca"/><rect x="2" y="23.15" width="2.3" height="1.5" fill="#c2c6ca"/><rect x="2" y="29.15" width="2.3" height="1.5" fill="#c2c6ca"/><g fill="none" stroke="#eceef0" stroke-width="1.7" stroke-linecap="square" stroke-linejoin="miter"><path d="M24 13 H13 M16.5 9.3 L12.8 13 L16.5 16.7"/><path d="M12.3 23 H23.3 M19.8 19.3 L23.5 23 L19.8 26.7"/></g></svg>
<div style="position:absolute;left:2216px;top:1226px;width:202px;height:64px;background:#fff;border:2.2px solid #1e2329;border-radius:9px;box-sizing:border-box;z-index:2"></div>
<svg style="position:absolute;left:2378px;top:1252px;z-index:3" width="24" height="16" viewBox="0 0 24 16"><path d="M3 3 L12 12 L21 3" fill="none" stroke="#454545" stroke-width="3" stroke-linecap="butt" stroke-linejoin="miter"/></svg>
<svg style="position:absolute;left:2450px;top:1235px;z-index:3" width="44" height="44" viewBox="0 0 44 44"><path d="M10.5 3.2 H34.1 Q40.6 3.2 40.6 9.7 V28.7 Q40.6 35.2 34.1 35.2 H21.2 L14.6 41.2 Q13.1 42.3 13.1 40.5 V36.8 Q13.1 35.2 11.5 35.2 H10.5 Q4 35.2 4 28.7 V9.7 Q4 3.2 10.5 3.2 Z" fill="#fff" stroke="#5f6c79" stroke-width="1.8" stroke-linejoin="round"/></svg>
<div style="position:absolute;left:323.50px;top:41.00px;font-size:32px;line-height:32px;font-weight:400;color:#0b0b0c;letter-spacing:1.412px;white-space:nowrap;z-index:5;-webkit-text-stroke:1.15px #0b0b0c">Hotel Paradise Inn</div>
<div style="position:absolute;left:1914.50px;top:43.50px;font-size:25px;line-height:25px;font-weight:400;color:#a4a8ad;letter-spacing:0.091px;white-space:nowrap;z-index:5">Search by...</div>
<div style="position:absolute;left:41.00px;top:132.30px;font-size:24px;line-height:24px;font-weight:400;color:#5e6c79;letter-spacing:1.312px;white-space:nowrap;z-index:5;-webkit-text-stroke:0.3px #5e6c79">Dashboard</div>
<div style="position:absolute;left:244.00px;top:132.30px;font-size:24px;line-height:24px;font-weight:400;color:#6832a8;letter-spacing:1.000px;white-space:nowrap;z-index:5;-webkit-text-stroke:0.85px #6832a8">Expense Management</div>
<div style="position:absolute;left:593.00px;top:132.30px;font-size:24px;line-height:24px;font-weight:400;color:#5e6c79;letter-spacing:0.933px;white-space:nowrap;z-index:5;-webkit-text-stroke:0.3px #5e6c79">Revenue Tracking</div>
<div style="position:absolute;left:891.60px;top:132.30px;font-size:24px;line-height:24px;font-weight:400;color:#5e6c79;letter-spacing:0.939px;white-space:nowrap;z-index:5;-webkit-text-stroke:0.3px #5e6c79">Banking &amp; Reconciliation</div>
<div style="position:absolute;left:1275.60px;top:132.30px;font-size:24px;line-height:24px;font-weight:400;color:#5e6c79;letter-spacing:0.800px;white-space:nowrap;z-index:5;-webkit-text-stroke:0.3px #5e6c79">Business Reports</div>
<div style="position:absolute;left:1569.20px;top:132.30px;font-size:24px;line-height:24px;font-weight:400;color:#5e6c79;letter-spacing:1.257px;white-space:nowrap;z-index:5;-webkit-text-stroke:0.3px #5e6c79">Mailroom</div>
<div style="position:absolute;left:1749.50px;top:132.30px;font-size:24px;line-height:24px;font-weight:400;color:#5e6c79;letter-spacing:1.386px;white-space:nowrap;z-index:5;-webkit-text-stroke:0.3px #5e6c79">Settings</div>
<div style="position:absolute;left:95.80px;top:212.00px;font-size:29px;line-height:29px;font-weight:700;color:#212a33;letter-spacing:0.020px;white-space:nowrap;z-index:5">Accounts Payable</div>
<div style="position:absolute;left:127.70px;top:249.30px;font-size:21px;line-height:21px;font-weight:400;color:#0a84ff;letter-spacing:0.215px;white-space:nowrap;z-index:5">accountspayable-hp@docyt.io</div>
<div style="position:absolute;left:104.80px;top:352.20px;font-size:29px;line-height:29px;font-weight:400;color:#232b34;letter-spacing:-0.167px;white-space:nowrap;z-index:5">Summary</div>
<div style="position:absolute;left:104.00px;top:436.20px;font-size:29px;line-height:29px;font-weight:400;color:#232b34;letter-spacing:0.133px;white-space:nowrap;z-index:5">Invoice Queue</div>
<div style="position:absolute;left:104.80px;top:520.20px;font-size:29px;line-height:29px;font-weight:400;color:#232b34;letter-spacing:0.177px;white-space:nowrap;z-index:5">Check Register</div>
<div style="position:absolute;left:105.80px;top:604.20px;font-size:29px;line-height:29px;font-weight:400;color:#232b34;letter-spacing:0.020px;white-space:nowrap;z-index:5">ACH Transactions</div>
<div style="position:absolute;left:104.80px;top:688.20px;font-size:29px;line-height:29px;font-weight:400;color:#232b34;letter-spacing:0.460px;white-space:nowrap;z-index:5">Settlement Items</div>
<div style="position:absolute;left:103.80px;top:772.20px;font-size:29px;line-height:29px;font-weight:400;color:#232b34;letter-spacing:-0.460px;white-space:nowrap;z-index:5">Payees</div>
<div style="position:absolute;left:103.80px;top:856.20px;font-size:29px;line-height:29px;font-weight:400;color:#232b34;letter-spacing:-0.100px;white-space:nowrap;z-index:5">Payment Rules</div>
<div style="position:absolute;left:104.80px;top:940.20px;font-size:29px;line-height:29px;font-weight:400;color:#232b34;letter-spacing:0.529px;white-space:nowrap;z-index:5">Settings</div>
<div style="position:absolute;left:517.70px;top:212.50px;font-size:40px;line-height:40px;font-weight:700;color:#212a33;letter-spacing:-0.975px;white-space:nowrap;z-index:5">Invoice Queue</div>
<div style="position:absolute;left:1268.00px;top:220.00px;font-size:24px;line-height:24px;font-weight:400;color:#7440a0;letter-spacing:0.733px;white-space:nowrap;z-index:5;-webkit-text-stroke:1.05px #7440a0">QUEUED (4)</div>
<div style="position:absolute;left:1464.40px;top:220.00px;font-size:24px;line-height:24px;font-weight:400;color:#a6aeb5;letter-spacing:1.214px;white-space:nowrap;z-index:5;-webkit-text-stroke:1.05px #a6aeb5">PAID (2)</div>
<div style="position:absolute;left:1613.80px;top:220.00px;font-size:24px;line-height:24px;font-weight:400;color:#a6aeb5;letter-spacing:0.720px;white-space:nowrap;z-index:5;-webkit-text-stroke:1.05px #a6aeb5">STOPPED (0)</div>
<div style="position:absolute;left:2367.10px;top:219.60px;font-size:25px;line-height:25px;font-weight:400;color:#ffffff;letter-spacing:0.530px;white-space:nowrap;z-index:5;-webkit-text-stroke:0.85px #ffffff">Add invoice</div>
<div style="position:absolute;left:575.00px;top:346.30px;font-size:24px;line-height:24px;font-weight:400;color:#232b34;letter-spacing:0.612px;white-space:nowrap;z-index:5">Uncleared Payments</div>
<div style="position:absolute;left:942.70px;top:346.30px;font-size:24px;line-height:24px;font-weight:400;color:#232b34;letter-spacing:0.620px;white-space:nowrap;z-index:5">Ready for Credit</div>
<div style="position:absolute;left:1281.70px;top:346.30px;font-size:24px;line-height:24px;font-weight:400;color:#232b34;letter-spacing:0.218px;white-space:nowrap;z-index:5">Ready to Pay</div>
<div style="position:absolute;left:1571.30px;top:346.30px;font-size:24px;line-height:24px;font-weight:400;color:#232b34;letter-spacing:0.785px;white-space:nowrap;z-index:5">Settlements Items (0)</div>
<div style="position:absolute;left:1988.70px;top:346.30px;font-size:24px;line-height:24px;font-weight:400;color:#232b34;letter-spacing:0.791px;white-space:nowrap;z-index:5">Invoices (0)</div>
<div style="position:absolute;left:2237.80px;top:346.30px;font-size:24px;line-height:24px;font-weight:400;color:#232b34;letter-spacing:0.578px;white-space:nowrap;z-index:5">Expense Reports (0)</div>
<div style="position:absolute;left:610.80px;top:388.20px;font-size:33px;line-height:33px;font-weight:700;color:#212a33;letter-spacing:1.975px;white-space:nowrap;z-index:5">$2,501.50</div>
<div style="position:absolute;left:989.00px;top:388.20px;font-size:33px;line-height:33px;font-weight:700;color:#212a33;letter-spacing:3.100px;white-space:nowrap;z-index:5">$0.00</div>
<div style="position:absolute;left:1278.30px;top:388.20px;font-size:33px;line-height:33px;font-weight:700;color:#212a33;letter-spacing:1.100px;white-space:nowrap;z-index:5">$1,271.00</div>
<div style="position:absolute;left:1647.50px;top:388.20px;font-size:33px;line-height:33px;font-weight:700;color:#212a33;letter-spacing:2.850px;white-space:nowrap;z-index:5">$0.00</div>
<div style="position:absolute;left:1978.90px;top:388.20px;font-size:33px;line-height:33px;font-weight:700;color:#212a33;letter-spacing:0.988px;white-space:nowrap;z-index:5">$1,271.00</div>
<div style="position:absolute;left:2307.60px;top:388.20px;font-size:33px;line-height:33px;font-weight:700;color:#212a33;letter-spacing:2.875px;white-space:nowrap;z-index:5">$0.00</div>
<div style="position:absolute;left:546.80px;top:525.50px;font-size:30px;line-height:30px;font-weight:400;color:#5a6873;letter-spacing:0.930px;white-space:nowrap;z-index:5;-webkit-text-stroke:0.6px #5a6873">Bulk Action</div>
<div style="position:absolute;left:864.00px;top:528.90px;font-size:28px;line-height:28px;font-weight:400;color:#56697a;letter-spacing:-0.833px;white-space:nowrap;z-index:5">Showing</div>
<div style="position:absolute;left:1025.40px;top:525.50px;font-size:30px;line-height:30px;font-weight:400;color:#5a6873;letter-spacing:-0.333px;white-space:nowrap;z-index:5">All queued invoices</div>
<div style="position:absolute;left:661.90px;top:637.75px;font-size:25px;line-height:25px;font-weight:400;color:#a4a9ad;letter-spacing:-0.109px;white-space:nowrap;z-index:5">Search payee</div>
<div style="position:absolute;left:1059.40px;top:637.50px;font-size:25px;line-height:25px;font-weight:400;color:#232b34;letter-spacing:-0.300px;white-space:nowrap;z-index:5">All</div>
<div style="position:absolute;left:1300.80px;top:637.50px;font-size:25px;line-height:25px;font-weight:400;color:#232b34;letter-spacing:-0.300px;white-space:nowrap;z-index:5">All</div>
<div style="position:absolute;left:1692.60px;top:637.75px;font-size:25px;line-height:25px;font-weight:400;color:#a4a9ad;letter-spacing:0.314px;white-space:nowrap;z-index:5">Invoice#</div>
<div style="position:absolute;left:1904.00px;top:637.75px;font-size:25px;line-height:25px;font-weight:400;color:#a4a9ad;letter-spacing:0.200px;white-space:nowrap;z-index:5">Start Date - End Date</div>
<div style="position:absolute;left:2261.00px;top:637.75px;font-size:25px;line-height:25px;font-weight:400;color:#a4a9ad;letter-spacing:0.243px;white-space:nowrap;z-index:5">$ Amount</div>
<div style="position:absolute;left:648.20px;top:716.00px;font-size:24px;line-height:24px;font-weight:400;color:#212a33;letter-spacing:0.350px;white-space:nowrap;z-index:5;-webkit-text-stroke:0.75px #212a33">Payee</div>
<div style="position:absolute;left:1040.00px;top:716.00px;font-size:24px;line-height:24px;font-weight:400;color:#212a33;letter-spacing:1.600px;white-space:nowrap;z-index:5;-webkit-text-stroke:0.75px #212a33">Status</div>
<div style="position:absolute;left:1279.50px;top:716.00px;font-size:24px;line-height:24px;font-weight:400;color:#212a33;letter-spacing:1.480px;white-space:nowrap;z-index:5;-webkit-text-stroke:0.75px #212a33">Chart of Account</div>
<div style="position:absolute;left:1638.80px;top:716.00px;font-size:24px;line-height:24px;font-weight:400;color:#212a33;letter-spacing:1.467px;white-space:nowrap;z-index:5;-webkit-text-stroke:0.75px #212a33">Invoice</div>
<div style="position:absolute;left:1839.80px;top:716.00px;font-size:24px;line-height:24px;font-weight:400;color:#212a33;letter-spacing:1.012px;white-space:nowrap;z-index:5;-webkit-text-stroke:0.75px #212a33">Bill Date</div>
<div style="position:absolute;left:2015.80px;top:716.00px;font-size:24px;line-height:24px;font-weight:400;color:#212a33;letter-spacing:1.080px;white-space:nowrap;z-index:5;-webkit-text-stroke:0.75px #212a33">Due in</div>
<div style="position:absolute;left:2217.20px;top:716.00px;font-size:24px;line-height:24px;font-weight:400;color:#212a33;letter-spacing:1.460px;white-space:nowrap;z-index:5;-webkit-text-stroke:0.75px #212a33">Amount</div>
<div style="position:absolute;left:714.60px;top:790.60px;font-size:24px;line-height:24px;font-weight:400;color:#232b34;letter-spacing:-0.588px;white-space:nowrap;z-index:5">HD Supply</div>
<div style="position:absolute;left:1065.80px;top:790.70px;font-size:24px;line-height:24px;font-weight:400;color:#f38a00;letter-spacing:0.536px;white-space:nowrap;z-index:5;-webkit-text-stroke:0.7px #f38a00">In Verification</div>
<div style="position:absolute;left:1295.50px;top:790.80px;font-size:24px;line-height:24px;font-weight:400;color:#a7aaad;letter-spacing:-0.757px;white-space:nowrap;z-index:5">Select Category</div>
<div style="position:absolute;left:1638.70px;top:790.80px;font-size:24px;line-height:24px;font-weight:400;color:#5d6a77;letter-spacing:0.436px;white-space:nowrap;z-index:5">INV-98530323</div>
<div style="position:absolute;left:2241.30px;top:793.00px;font-size:23.5px;line-height:23.5px;font-weight:400;color:#3b3637;letter-spacing:0.000px;white-space:nowrap;z-index:5;-webkit-text-stroke:0.8px #3b3637">$</div>
<div style="position:absolute;left:2260.80px;top:793.00px;font-size:23.5px;line-height:23.5px;font-weight:400;color:#3b3637;letter-spacing:0.000px;white-space:nowrap;z-index:5;-webkit-text-stroke:0.8px #3b3637">0</div>
<div style="position:absolute;left:715.60px;top:866.60px;font-size:24px;line-height:24px;font-weight:400;color:#232b34;letter-spacing:-0.381px;white-space:nowrap;z-index:5">Carbon’s Golden Malted</div>
<div style="position:absolute;left:1071.80px;top:866.70px;font-size:24px;line-height:24px;font-weight:400;color:#27ae60;letter-spacing:-0.418px;white-space:nowrap;z-index:5;-webkit-text-stroke:0.7px #27ae60">Ready to Pay</div>
<div style="position:absolute;left:1295.50px;top:866.80px;font-size:24px;line-height:24px;font-weight:400;color:#0e0f10;letter-spacing:-0.680px;white-space:nowrap;z-index:5">Credit Card</div>
<div style="position:absolute;left:1638.70px;top:866.80px;font-size:24px;line-height:24px;font-weight:400;color:#5d6a77;letter-spacing:-0.582px;white-space:nowrap;z-index:5">INV-92119211</div>
<div style="position:absolute;left:1840.00px;top:866.80px;font-size:24px;line-height:24px;font-weight:400;color:#232b34;letter-spacing:-0.555px;white-space:nowrap;z-index:5">Jan 27, 2023</div>
<div style="position:absolute;left:2015.90px;top:866.80px;font-size:24px;line-height:24px;font-weight:400;color:#232b34;letter-spacing:-0.620px;white-space:nowrap;z-index:5">2 days</div>
<div style="position:absolute;left:2241.30px;top:869.00px;font-size:23.5px;line-height:23.5px;font-weight:400;color:#3b3637;letter-spacing:0.000px;white-space:nowrap;z-index:5;-webkit-text-stroke:0.8px #3b3637">$</div>
<div style="position:absolute;left:2260.80px;top:869.00px;font-size:23.5px;line-height:23.5px;font-weight:400;color:#3b3637;letter-spacing:2.060px;white-space:nowrap;z-index:5;-webkit-text-stroke:0.8px #3b3637">504.98</div>
<div style="position:absolute;left:715.60px;top:942.60px;font-size:24px;line-height:24px;font-weight:400;color:#232b34;letter-spacing:-0.527px;white-space:nowrap;z-index:5">Johnson Family Partners</div>
<div style="position:absolute;left:1065.80px;top:942.70px;font-size:24px;line-height:24px;font-weight:400;color:#f38a00;letter-spacing:0.536px;white-space:nowrap;z-index:5;-webkit-text-stroke:0.7px #f38a00">In Verification</div>
<div style="position:absolute;left:1295.50px;top:942.80px;font-size:24px;line-height:24px;font-weight:400;color:#a7aaad;letter-spacing:-0.757px;white-space:nowrap;z-index:5">Select Category</div>
<div style="position:absolute;left:1638.70px;top:942.80px;font-size:24px;line-height:24px;font-weight:400;color:#5d6a77;letter-spacing:-0.027px;white-space:nowrap;z-index:5">INV-45672123</div>
<div style="position:absolute;left:1839.00px;top:942.80px;font-size:24px;line-height:24px;font-weight:400;color:#232b34;letter-spacing:-0.491px;white-space:nowrap;z-index:5">Dec 16, 2022</div>
<div style="position:absolute;left:2015.90px;top:942.80px;font-size:24px;line-height:24px;font-weight:400;color:#232b34;letter-spacing:-0.620px;white-space:nowrap;z-index:5">2 days</div>
<div style="position:absolute;left:2241.30px;top:945.00px;font-size:23.5px;line-height:23.5px;font-weight:400;color:#3b3637;letter-spacing:0.000px;white-space:nowrap;z-index:5;-webkit-text-stroke:0.8px #3b3637">$</div>
<div style="position:absolute;left:2259.80px;top:945.00px;font-size:23.5px;line-height:23.5px;font-weight:400;color:#3b3637;letter-spacing:1.400px;white-space:nowrap;z-index:5;-webkit-text-stroke:0.8px #3b3637">10.98</div>
<div style="position:absolute;left:715.60px;top:1018.60px;font-size:24px;line-height:24px;font-weight:400;color:#232b34;letter-spacing:-0.631px;white-space:nowrap;z-index:5">Sigma Health Care</div>
<div style="position:absolute;left:1065.80px;top:1018.70px;font-size:24px;line-height:24px;font-weight:400;color:#f38a00;letter-spacing:0.536px;white-space:nowrap;z-index:5;-webkit-text-stroke:0.7px #f38a00">In Verification</div>
<div style="position:absolute;left:1296.50px;top:1018.80px;font-size:24px;line-height:24px;font-weight:400;color:#0e0f10;letter-spacing:-0.752px;white-space:nowrap;z-index:5">Accounts Payable - Docyt</div>
<div style="position:absolute;left:1638.70px;top:1018.80px;font-size:24px;line-height:24px;font-weight:400;color:#5d6a77;letter-spacing:0.382px;white-space:nowrap;z-index:5">INV-98367839</div>
<div style="position:absolute;left:1839.00px;top:1018.80px;font-size:24px;line-height:24px;font-weight:400;color:#232b34;letter-spacing:-0.100px;white-space:nowrap;z-index:5">Feb 08, 2023</div>
<div style="position:absolute;left:2016.60px;top:1004.80px;font-size:21.5px;line-height:21.5px;font-weight:400;color:#ff4a4a;letter-spacing:0.600px;white-space:nowrap;z-index:5">2 years</div>
<div style="position:absolute;left:2024.00px;top:1038.80px;font-size:16px;line-height:16px;font-weight:400;color:#ffffff;letter-spacing:0.500px;white-space:nowrap;z-index:5;-webkit-text-stroke:0.35px #ffffff">Overdue</div>
<div style="position:absolute;left:2241.30px;top:1021.00px;font-size:23.5px;line-height:23.5px;font-weight:400;color:#3b3637;letter-spacing:0.000px;white-space:nowrap;z-index:5;-webkit-text-stroke:0.8px #3b3637">$</div>
<div style="position:absolute;left:2259.80px;top:1021.00px;font-size:23.5px;line-height:23.5px;font-weight:400;color:#3b3637;letter-spacing:1.300px;white-space:nowrap;z-index:5;-webkit-text-stroke:0.8px #3b3637">100.50</div>
<div style="position:absolute;left:714.60px;top:1094.60px;font-size:24px;line-height:24px;font-weight:400;color:#232b34;letter-spacing:-0.410px;white-space:nowrap;z-index:5">Better Business Bureau</div>
<div style="position:absolute;left:1071.80px;top:1094.70px;font-size:24px;line-height:24px;font-weight:400;color:#27ae60;letter-spacing:-0.418px;white-space:nowrap;z-index:5;-webkit-text-stroke:0.7px #27ae60">Ready to Pay</div>
<div style="position:absolute;left:1295.50px;top:1094.80px;font-size:24px;line-height:24px;font-weight:400;color:#0e0f10;letter-spacing:-0.680px;white-space:nowrap;z-index:5">Credit Card</div>
<div style="position:absolute;left:1638.70px;top:1094.80px;font-size:24px;line-height:24px;font-weight:400;color:#5d6a77;letter-spacing:0.318px;white-space:nowrap;z-index:5">INV-56763429</div>
<div style="position:absolute;left:1839.00px;top:1094.80px;font-size:24px;line-height:24px;font-weight:400;color:#232b34;letter-spacing:-0.127px;white-space:nowrap;z-index:5">May 05, 2023</div>
<div style="position:absolute;left:2015.90px;top:1094.80px;font-size:24px;line-height:24px;font-weight:400;color:#232b34;letter-spacing:-0.620px;white-space:nowrap;z-index:5">2 days</div>
<div style="position:absolute;left:2241.30px;top:1097.00px;font-size:23.5px;line-height:23.5px;font-weight:400;color:#3b3637;letter-spacing:0.000px;white-space:nowrap;z-index:5;-webkit-text-stroke:0.8px #3b3637">$</div>
<div style="position:absolute;left:2259.80px;top:1097.00px;font-size:23.5px;line-height:23.5px;font-weight:400;color:#3b3637;letter-spacing:1.100px;white-space:nowrap;z-index:5;-webkit-text-stroke:0.8px #3b3637">213.50</div>
<div style="position:absolute;left:716.60px;top:1170.60px;font-size:24px;line-height:24px;font-weight:400;color:#232b34;letter-spacing:-1.186px;white-space:nowrap;z-index:5">Acme LLC</div>
<div style="position:absolute;left:1065.80px;top:1170.70px;font-size:24px;line-height:24px;font-weight:400;color:#f38a00;letter-spacing:0.536px;white-space:nowrap;z-index:5;-webkit-text-stroke:0.7px #f38a00">In Verification</div>
<div style="position:absolute;left:1295.50px;top:1170.80px;font-size:24px;line-height:24px;font-weight:400;color:#a7aaad;letter-spacing:-0.757px;white-space:nowrap;z-index:5">Select Category</div>
<div style="position:absolute;left:1638.70px;top:1170.80px;font-size:24px;line-height:24px;font-weight:400;color:#5d6a77;letter-spacing:-0.091px;white-space:nowrap;z-index:5">INV-68217845</div>
<div style="position:absolute;left:1841.00px;top:1170.80px;font-size:24px;line-height:24px;font-weight:400;color:#232b34;letter-spacing:-0.173px;white-space:nowrap;z-index:5">Apr 23, 2023</div>
<div style="position:absolute;left:2015.90px;top:1170.80px;font-size:24px;line-height:24px;font-weight:400;color:#232b34;letter-spacing:-0.540px;white-space:nowrap;z-index:5">3 days</div>
<div style="position:absolute;left:2241.30px;top:1173.00px;font-size:23.5px;line-height:23.5px;font-weight:400;color:#3b3637;letter-spacing:0.000px;white-space:nowrap;z-index:5;-webkit-text-stroke:0.8px #3b3637">$</div>
<div style="position:absolute;left:2260.80px;top:1173.00px;font-size:23.5px;line-height:23.5px;font-weight:400;color:#3b3637;letter-spacing:1.750px;white-space:nowrap;z-index:5;-webkit-text-stroke:0.8px #3b3637">82.50</div>
<div style="position:absolute;left:714.60px;top:1246.60px;font-size:24px;line-height:24px;font-weight:400;color:#232b34;letter-spacing:-0.469px;white-space:nowrap;z-index:5">Konica Minolta</div>
<div style="position:absolute;left:1065.80px;top:1246.70px;font-size:24px;line-height:24px;font-weight:400;color:#f38a00;letter-spacing:0.536px;white-space:nowrap;z-index:5;-webkit-text-stroke:0.7px #f38a00">In Verification</div>
<div style="position:absolute;left:1296.50px;top:1246.80px;font-size:24px;line-height:24px;font-weight:400;color:#0e0f10;letter-spacing:-0.752px;white-space:nowrap;z-index:5">Accounts Payable - Docyt</div>
<div style="position:absolute;left:1638.70px;top:1246.80px;font-size:24px;line-height:24px;font-weight:400;color:#5d6a77;letter-spacing:0.064px;white-space:nowrap;z-index:5">INV-74568732</div>
<div style="position:absolute;left:1840.00px;top:1246.80px;font-size:24px;line-height:24px;font-weight:400;color:#232b34;letter-spacing:-0.518px;white-space:nowrap;z-index:5">Jan 10, 2023</div>
<div style="position:absolute;left:2015.90px;top:1246.80px;font-size:24px;line-height:24px;font-weight:400;color:#232b34;letter-spacing:-0.540px;white-space:nowrap;z-index:5">6 days</div>
<div style="position:absolute;left:2241.30px;top:1249.00px;font-size:23.5px;line-height:23.5px;font-weight:400;color:#3b3637;letter-spacing:0.000px;white-space:nowrap;z-index:5;-webkit-text-stroke:0.8px #3b3637">$</div>
<div style="position:absolute;left:2259.80px;top:1249.00px;font-size:23.5px;line-height:23.5px;font-weight:400;color:#3b3637;letter-spacing:1.300px;white-space:nowrap;z-index:5;-webkit-text-stroke:0.8px #3b3637">156.50</div>
</body></html>
